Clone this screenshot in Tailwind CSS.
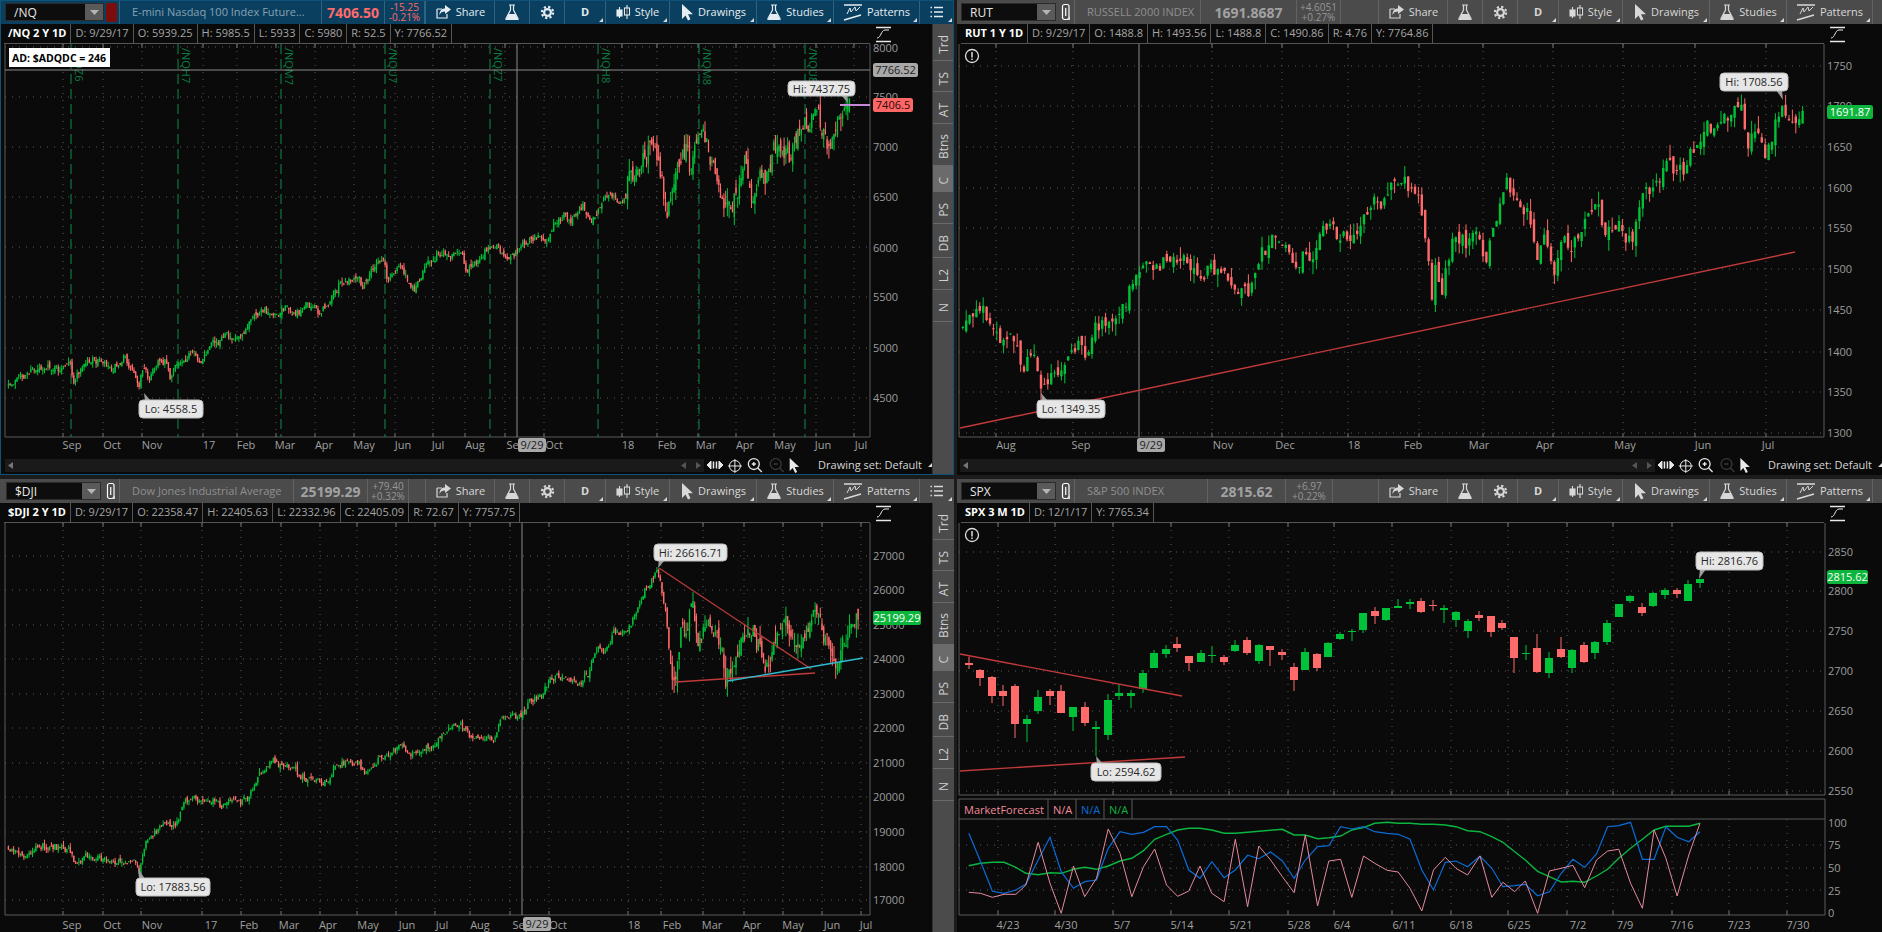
<!DOCTYPE html>
<html lang="en">
<head>
  <meta charset="UTF-8">
  <title>Flexible Grid</title>
  <script src="https://cdn.jsdelivr.net/npm/@tailwindcss/browser@4"></script>
</head>
<body class="bg-[#1c1c1c] font-['Open_Sans',sans-serif] overflow-hidden">
  <div id="grid" class="grid h-[932px] w-[1882px] grid-cols-[954px_925px] grid-rows-[475px_453px] gap-x-[3px] gap-y-[4px] overflow-hidden"></div>

  <script>
    const FONT = "'Open Sans',sans-serif";
    const GREEN = '#00c238', RED = '#ff6a6a';

    // toolbar icons
    const corner = '<svg class="absolute bottom-[2px] right-[2px]" width="4" height="4"><path d="M4 0V4H0z" fill="#d8d8d8"/></svg>';
    const icons = {
      share: '<svg width="17" height="16" viewBox="0 0 17 16" fill="none" stroke="currentColor" stroke-width="1.2"><path d="M2 5h5M2 5v9h10v-4"/><path d="M10 1l6 4.5-6 4.5V7.500C7 7.500 5.500 8.500 4.500 11c0-4 2-6.500 5.500-6.500z" fill="currentColor" stroke="none"/></svg>',
      flask: '<svg width="16" height="17" viewBox="0 0 16 17" fill="none" stroke="currentColor" stroke-width="1.2"><path d="M5 1h6M6.500 1v5l-4.500 8.500q-.5 1 .5 1h11q1 0 .5-1L9.500 6V1"/><path d="M4.500 10h7l2.500 5.500H2z" fill="currentColor" stroke="none"/></svg>',
      gear: '<svg width="15" height="15" viewBox="0 0 15 15" fill="none" stroke="currentColor"><circle cx="7.500" cy="7.500" r="5.600" stroke-width="2.200" stroke-dasharray="2.200 2.200"/><circle cx="7.500" cy="7.500" r="3.400" stroke-width="2.200"/></svg>',
      style: '<svg width="15" height="16" viewBox="0 0 15 16" fill="none" stroke="currentColor" stroke-width="1.100"><path d="M3.500 3v11M11 1v14"/><rect x="1" y="6" width="5" height="6" fill="currentColor"/><rect x="8.500" y="4" width="5" height="7" fill="#00000055"/></svg>',
      cursor: '<svg width="14" height="17" viewBox="0 0 14 17" fill="currentColor"><path d="M2 0v15l3.500-3.500 2.500 5 2.500-1.200-2.500-5h5z"/></svg>',
      patterns: '<svg width="20" height="18" viewBox="0 0 20 18" fill="none" stroke="currentColor"><path d="M1 2h18" stroke-width="1.500"/><path d="M4 11l3-6 1 4 4-5 1 4 4-4" stroke-width="1"/><path d="M1 17l17-5" stroke-width="1.500"/></svg>',
      list: '<svg width="14" height="14" viewBox="0 0 14 14" fill="none" stroke="currentColor" stroke-width="1.400"><path d="M4 2.500h9M4 7h9M4 11.500h9M.5 2.500h1.500M.5 7h1.500M.5 11.500h1.500"/></svg>',
      link: '<svg width="10" height="18" viewBox="0 0 10 18" fill="none" stroke="currentColor" stroke-width="1.200"><rect x="1.500" y="1.500" width="6.500" height="15" rx="2"/><path d="M4.750 5v8"/></svg>',
    };

    function cell(width, inner, more) {
      return `<div class="relative flex shrink-0 items-center justify-center gap-1 border-l ${width} ${more.sep}">${inner}${more.mark ? corner : ''}</div>`;
    }

    function toolbar(p) {
      const t = p.active
        ? { bar: 'bg-[#0b3f5f] text-[#e4edf2]', sep: 'border-[#2c6283]', desc: 'text-[#86a2b3]', price: 'text-[#ff6a6a]', change: 'text-[#ff6a6a]' }
        : { bar: 'bg-[#4b4b4b] text-[#d8d8d8]', sep: 'border-[#626262]', desc: 'text-[#8f8f8f]', price: 'text-[#a2a2a2]', change: 'text-[#969696]' };
      const linkBox = p.active
        ? '<div class="ml-[2px] h-[19px] w-[11px] rounded-[2px] bg-[#7c0d0d]"></div>'
        : `<div class="relative ml-1 flex h-[19px] w-[12px] items-center justify-center text-white">${icons.link}${corner}</div>`;
      return `
        <div class="flex h-6 shrink-0 overflow-hidden text-[11px] ${t.bar}">
          <div class="flex shrink-0 items-center ${p.leftW}">
            <div class="flex h-[18px] items-stretch border border-[#2b2b2b] bg-[#0d0d0d] ${p.inputW} ${p.inputMl}">
              <span class="flex-1 pl-2 text-[12px] leading-[17px] text-[#e8e8e8]">${p.symbol}</span>
              <span class="flex w-[18px] items-center justify-center bg-[#5a5a5a]"><svg width="9" height="5"><path d="M0 0h9L4.500 5z" fill="#b5b5b5"/></svg></span>
            </div>
            ${linkBox}
            <div class="ml-[2px] flex h-full min-w-0 flex-1 items-center whitespace-nowrap border-l pl-3 text-[11px] ${t.sep} ${t.desc}">${p.desc}</div>
            <div class="flex h-full shrink-0 items-center justify-center border-l text-[14px] font-bold ${p.priceW} ${t.sep} ${t.price}">${p.price}</div>
            <div class="flex h-full shrink-0 flex-col items-center justify-center border-l text-[10px] leading-[10px] ${p.changeW} ${t.sep} ${t.change}"><span>${p.change[0]}</span><span>${p.change[1]}</span></div>
            <div class="h-full shrink-0 border-l ${p.gapW} ${t.sep}"></div>
          </div>
          ${cell('w-[69px]', icons.share + '<span>Share</span>', { sep: t.sep })}
          ${cell('w-[35px]', icons.flask, { sep: t.sep })}
          ${cell('w-[35px]', icons.gear, { sep: t.sep })}
          ${cell('w-[41px]', '<span class="font-bold">D</span>', { sep: t.sep, mark: true })}
          ${cell('w-[64px]', icons.style + '<span>Style</span>', { sep: t.sep, mark: true })}
          ${cell('w-[87px]', icons.cursor + '<span>Drawings</span>', { sep: t.sep, mark: true })}
          ${cell('w-[77px]', icons.flask + '<span>Studies</span>', { sep: t.sep, mark: true })}
          ${cell('w-[86px]', icons.patterns + '<span>Patterns</span>', { sep: t.sep, mark: true })}
          ${cell('w-[35px]', icons.list, { sep: t.sep, mark: true })}
        </div>`;
    }

    function infoRow(p) {
      const cells = p.info.map((txt, i) =>
        `<span class="flex items-center border-r border-[#555] px-[4px] text-[11px] ${i === 0 ? 'font-bold text-white' : 'text-[#a5a5a5]'}">${txt}</span>`).join('');
      return `
        <div class="flex h-5 shrink-0 bg-[#0a0a0a]">
          <div class="ml-[4px] flex flex-1 border-b border-[#555]">${cells}</div>
          <div class="flex shrink-0 items-center pl-[5px] ${p.axisW}">
            <svg width="17" height="17" viewBox="0 0 17 17" fill="none" stroke="#e8e8e8"><path d="M1 1.500h15M1 15.500h15" stroke-width="1.500"/><path d="M2 12c4 0 4-8 8-8h4" stroke-width="1"/></svg>
          </div>
        </div>`;
    }

    function rail() {
      const tabs = [['Trd', 'h-[37px]'], ['TS', 'h-[31px]'], ['AT', 'h-[32px]'], ['Btns', 'h-[42px]'], ['C', 'h-[26px]'], ['PS', 'h-[32px]'], ['DB', 'h-[34px]'], ['L2', 'h-[32px]'], ['N', 'h-[32px]']];
      const html = tabs.map(([name, h]) =>
        `<div class="flex ${h} items-center justify-center border-b border-[#6a6a6a] pt-[5px] ${name === 'C' ? 'bg-[#6b6b6b]' : ''}"><span class="rotate-180 text-[12px] text-[#cfcfcf] [writing-mode:vertical-rl]">${name}</span></div>`).join('');
      return `<div class="flex w-[22px] shrink-0 flex-col border-l border-[#333] bg-[#4b4b4b]">${html}</div>`;
    }

    function bottomStrip(ml, w, gap) {
      return `
        <div class="flex h-4 shrink-0 items-center bg-[#0a0a0a] text-[11px] text-[#d5d5d5]">
          <div class="flex h-[13px] items-center justify-between bg-[#1a1a1a] px-[3px] ${ml} ${w}">
            <svg width="5" height="7"><path d="M5 0v7L0 3.500z" fill="#777"/></svg>
            <svg width="20" height="7"><path d="M5 0v7L0 3.500zM15 0v7l5-3.500z" fill="#555"/></svg>
          </div>
          <svg class="ml-[3px]" width="100" height="17" viewBox="0 0 100 17" fill="none" stroke="#e8e8e8">
            <path d="M0 8l4-4v8zM16 8l-4-4v8z" fill="#e8e8e8"/><path d="M6.500 4.500v7M9.500 4.500v7" stroke-width="1.500"/>
            <circle cx="28" cy="9" r="5.500"/><path d="M28 2v14M21 9h14"/>
            <circle cx="47" cy="7" r="5.500" stroke-width="1.300"/><path d="M45 7h4M47 5v4M51 11l4 4" stroke-width="1.300"/>
            <g stroke="#3a3a3a"><circle cx="69" cy="7" r="5.500" stroke-width="1.300"/><path d="M67 7h4M73 11l4 4" stroke-width="1.300"/></g>
            <path d="M83 1v13l3-3 2.500 5 2-1-2.500-5h4.500z" fill="#e8e8e8" stroke="none"/>
          </svg>
          <span class="whitespace-nowrap ${gap}">Drawing set: Default</span>
          <svg class="ml-[6px]" width="4" height="4"><path d="M4 0V4H0z" fill="#d8d8d8"/></svg>
        </div>`;
    }

    // svg helpers, coordinates are page pixels
    const txt = (x, y, s, fill, size = 11, extra = '') =>
      `<text x="${x}" y="${y}" fill="${fill}" font-size="${size}" font-family="${FONT}" ${extra}>${s}</text>`;
    const line = (x1, y1, x2, y2, stroke, w = 1, extra = '') =>
      `<line x1="${x1}" y1="${y1}" x2="${x2}" y2="${y2}" stroke="${stroke}" stroke-width="${w}" ${extra}/>`;

    function bubble(x, y, w, h, tailX, tailY, label) {
      const baseX = tailX < x + w / 2 ? tailX + 1 : tailX - 7;
      const edge = tailY < y ? y + 1 : y + h - 1;
      return `<path d="M${baseX} ${edge}L${baseX + 6} ${edge}L${tailX} ${tailY}z" fill="#9c9c9c"/>` +
        `<rect x="${x}" y="${y}" width="${w}" height="${h}" rx="4" fill="#e6e6e6" stroke="#bdbdbd"/>` +
        txt(x + w / 2, y + h / 2 + 4, label, '#262626', 11, 'text-anchor="middle"');
    }

    function tag(x, y, w, label, bg, color) {
      return `<rect x="${x}" y="${y - 7}" width="${w}" height="14" rx="2.500" fill="${bg}"/>` +
        txt(x + w / 2, y + 4, label, color, 11, 'text-anchor="middle"');
    }

    function frame(c) {
      let s = '';
      c.grid.forEach(y => { s += line(c.l, y, c.r, y, '#5a5a5a', 1, 'stroke-dasharray="1 6"'); });
      c.ticks.forEach(x => {
        s += line(x, c.t, x, c.b, '#5a5a5a', 1, 'stroke-dasharray="1 6"');
        s += line(x, c.t, x, c.t + 4, '#777') + line(x, c.b - 4, x, c.b, '#777');
      });
      s += line(c.l, c.t, c.l, c.b, '#5a5a5a') + line(c.r, c.t, c.r, c.b, '#5a5a5a') + line(c.l, c.b, c.r, c.b, '#5a5a5a');
      c.ylabels.forEach(([y, label]) => { s += txt(c.r + 3, y + 4, label, '#9c9c9c'); });
      c.xlabels.forEach(([x, label]) => { s += txt(x, c.labelY, label, '#a0a0a0', 11, 'text-anchor="middle"'); });
      return s;
    }

    // seeded random candles that follow hand-read waypoints
    function rng(seed) {
      return () => {
        seed = (seed + 0x6d2b79f5) | 0;
        let t = Math.imul(seed ^ (seed >>> 15), 1 | seed);
        t = (t + Math.imul(t ^ (t >>> 7), 61 | t)) ^ t;
        return ((t ^ (t >>> 14)) >>> 0) / 4294967296;
      };
    }

    function candlesFrom(raw, mapX, mapY, o) {
      const pts = [];
      for (let i = 0; i < raw.length; i += 2) pts.push([mapX(raw[i]), mapY(raw[i + 1])]);
      const rand = rng(o.seed);
      const out = [];
      let seg = 0, noise = 0, prev = pts[0][1];
      for (let x = pts[0][0]; x <= pts[pts.length - 1][0]; x += o.step) {
        while (seg < pts.length - 2 && x > pts[seg + 1][0]) seg++;
        const [x0, y0] = pts[seg], [x1, y1] = pts[seg + 1];
        const target = y0 + (y1 - y0) * (x - x0) / (x1 - x0);
        const big = x > o.split;
        const vol = big ? o.volB : o.volA, wick = big ? o.wickB : o.wickA;
        noise = noise * 0.3 + (rand() - 0.5) * vol * 2;
        const close = target + noise;
        const open = prev + (rand() - 0.5) * vol * 1.2;
        const top = Math.min(open, close), bot = Math.max(open, close);
        const up = rand(), down = rand();
        out.push([x, top, Math.max(bot, top + 1), top - up * up * wick * 1.6, bot + down * down * wick * 1.6, close < open]);
        prev = close;
      }
      return out;
    }

    function drawCandles(list, bodyW) {
      let g = '', r = '', gb = '', rb = '';
      list.forEach(([x, top, bot, hi, lo, up]) => {
        const wick = `M${x.toFixed(1)} ${hi.toFixed(1)}V${lo.toFixed(1)}`;
        const body = `M${x.toFixed(1)} ${top.toFixed(1)}V${bot.toFixed(1)}`;
        if (up) { g += wick; gb += body; } else { r += wick; rb += body; }
      });
      return `<path d="${g}" stroke="${GREEN}" fill="none"/><path d="${r}" stroke="${RED}" fill="none"/>` +
        `<path d="${gb}" stroke="${GREEN}" stroke-width="${bodyW}" fill="none"/><path d="${rb}" stroke="${RED}" stroke-width="${bodyW}" fill="none"/>`;
    }

    // /NQ
    const nqRaw = [15,895,25,875,45,855,70,830,95,835,115,840,125,825,130,880,140,850,155,815,185,810,200,835,220,800,235,835,248,878,255,830,265,865,285,812,297,810,303,860,320,815,340,790,360,815,380,765,405,740,425,735,455,680,470,665,495,665,515,650,525,675,548,640,570,665,585,640,605,585,640,570,645,600,665,535,685,508,690,570,715,530,738,600,755,540,780,490,800,505,825,495,830,540,845,525,865,480,885,470,908,515,930,465,960,435,975,465,985,405,1005,375,1020,395,1040,350,1055,400,1070,350,1085,312,1108,350,1120,270,1140,225,1160,165,1175,220,1188,380,1198,280,1222,180,1232,250,1248,120,1265,200,1280,300,1295,360,1310,320,1328,220,1340,320,1350,250,1360,285,1380,180,1410,200,1430,110,1458,80,1472,155,1488,165,1497,90,1510,50,1515,45];
    const nqCandles = candlesFrom(nqRaw, v => v / 1.782, v => 90 + v / 3, { seed: 7, step: 1.72, split: 625, volA: 4, volB: 10, wickA: 3, wickB: 8 });

    // RUT
    const rutRaw = [5,715,15,680,40,665,55,710,78,770,100,755,110,850,125,800,135,825,145,890,155,880,175,835,195,800,205,755,230,785,245,720,265,685,300,650,310,570,328,515,345,515,395,530,410,515,430,550,475,545,490,595,520,620,540,500,565,450,580,430,600,510,625,490,640,510,650,420,670,430,700,440,735,385,750,320,760,350,785,280,810,285,830,350,840,430,850,620,858,520,865,620,885,480,895,430,910,465,928,395,945,520,965,380,985,290,1010,355,1025,340,1040,510,1055,430,1070,570,1090,430,1098,505,1120,400,1140,340,1165,410,1185,400,1195,440,1215,425,1225,330,1250,280,1270,230,1305,235,1320,175,1350,110,1370,100,1395,70,1408,30,1420,140,1435,125,1443,190,1455,185,1470,100,1478,40,1490,80,1508,95,1520,70];
    const rutCandles = candlesFrom(rutRaw, v => 960 + v / 1.802, v => 90 + v / 3, { seed: 21, step: 3.4, split: 9999, volA: 9, volB: 9, wickA: 8, wickB: 8 });

    // $DJI
    const djiRaw = [15,925,45,945,75,915,120,925,135,975,155,945,200,965,235,960,248,988,258,925,265,890,295,860,315,850,328,780,370,780,400,800,415,765,430,785,445,760,465,700,485,655,500,680,525,680,535,715,585,725,597,665,640,670,650,705,680,650,715,620,740,640,775,605,800,570,820,550,840,595,880,590,890,550,905,525,925,535,945,480,965,465,980,420,1010,405,1030,430,1050,400,1065,320,1075,345,1095,275,1115,280,1135,215,1150,150,1172,90,1185,200,1195,370,1203,420,1215,240,1225,280,1235,175,1245,330,1260,215,1285,300,1293,410,1305,400,1320,310,1340,270,1365,380,1390,265,1410,260,1425,320,1447,218,1470,290,1490,355,1510,280,1530,235];
    const djiCandles = candlesFrom(djiRaw, v => v / 1.782, v => 540 + v / 3, { seed: 3, step: 1.72, split: 670, volA: 3.6, volB: 10, wickA: 2.5, wickB: 8 });

    // SPX candles read off the chart: x, body top, body bottom, wick top, wick bottom, up
    const spxA = [[27,429,435,410,447,0],[60,450,474,447,498,0],[96,471,528,468,549,0],[129,513,528,495,558,0],[165,498,612,492,654,0],[201,597,612,585,666,1],[234,531,573,510,582,1],[270,513,528,507,555,0],[303,513,579,495,579,0],[339,561,591,561,633,1],[375,561,609,546,618,0],[408,621,627,603,708,1],[444,540,645,522,660,1],[477,519,528,492,540,1],[513,519,528,510,564,1],[549,459,507,450,519,1],[582,399,444,390,444,1],[618,387,402,375,414,1],[651,372,384,351,396,0],[687,408,429,408,453,0],[723,399,426,390,426,1],[756,405,408,378,429,1],[792,411,426,405,435,0],[825,375,393,360,396,1],[861,360,399,351,405,0],[897,375,423,372,432,1],[930,378,390,378,438,0],[966,396,405,387,420,0],[1002,441,480,429,513,0],[1035,396,450,384,450,1],[1071,402,444,399,453,0],[1104,369,411,366,411,1],[1140,342,357,336,360,1],[1176,333,336,327,363,1],[1209,279,330,279,339,1],[1245,273,288,261,312,0],[1278,264,300,264,303,1],[1314,258,264,237,264,1],[1350,246,252,237,267,1],[1383,243,276,234,279,0],[1419,255,258,240,273,0],[1452,264,270,255,309,1]];
    const spxB = [[18,216,240,213,261,1],[54,243,273,237,294,1],[87,225,234,213,243,0],[123,228,276,228,291,0],[156,249,264,240,270,0],[192,291,354,291,399,0],[228,339,342,315,360,1],[261,324,396,282,399,0],[297,354,399,336,414,1],[333,327,351,291,354,0],[366,330,384,327,399,1],[402,315,366,306,369,0],[435,306,339,303,357,1],[471,249,306,240,315,1],[507,192,231,192,231,1],[540,168,183,165,189,1],[576,201,219,189,228,0],[609,159,198,156,201,1],[645,150,165,144,177,1],[681,150,162,144,174,0],[714,132,183,120,183,1],[750,117,129,117,144,1]];
    const spxCandles = [
      ...spxA.map(c => [960 + c[0] / 3, 520 + c[1] / 3, 520 + c[2] / 3, 520 + c[3] / 3, 520 + c[4] / 3, !!c[5]]),
      ...spxB.map(c => [1450 + c[0] / 3, 540 + c[1] / 3, 540 + c[2] / 3, 540 + c[3] / 3, 540 + c[4] / 3, !!c[5]]),
    ];

    // MarketForecast study, x is shared by all three lines
    const mfX = [15,35,55,75,95,112,133,153,172,193,212,232,252,272,292,312,331,351,370,389,408,428,449,468,489,508,528,548,568,587,608,627,647,666,686,705,726,745,765,785,805,825,843,863,884,904,923,943,961,982,1002,1022,1042,1062,1082,1101,1120,1140,1160,1180,1200,1219,1239,1258];
    const mfPink = [337,340,352,343,343,315,187,310,400,258,350,295,147,220,350,260,207,315,349,333,258,340,365,178,380,198,240,290,338,165,378,243,238,352,228,250,271,276,325,393,270,232,265,285,228,352,307,335,303,400,273,265,256,323,240,213,208,310,385,150,235,348,225,130];
    const mfBlue = [160,245,334,340,330,312,240,172,275,325,305,300,205,155,163,157,140,140,180,270,295,245,293,270,226,236,216,243,295,240,200,197,140,147,140,155,160,163,178,270,330,247,243,260,228,265,320,317,313,347,335,280,238,262,222,140,137,127,238,238,140,172,185,155];
    const mfGreen = [257,250,247,247,262,280,284,278,280,268,262,268,258,243,235,212,178,163,150,145,145,150,160,160,157,154,151,148,165,165,176,173,168,150,143,130,127,130,130,133,133,135,140,152,155,170,187,215,240,274,290,306,304,307,288,268,235,205,178,150,139,139,139,130];
    const mfLine = (ys, color, w) =>
      `<polyline fill="none" stroke="${color}" stroke-width="${w}" points="${ys.map((y, i) => `${(960 + mfX[i] / 1.7).toFixed(1)},${(780 + y / 3).toFixed(1)}`).join(' ')}"/>`;

    const nqChart = {
      l: 5, r: 870, t: 44, b: 437, labelY: 449,
      grid: [47, 97, 147, 197, 247, 297, 348, 398],
      ticks: [63, 103, 142, 203, 237, 276, 315, 354, 395, 433, 465, 505, 544, 622, 657, 698, 736, 774, 816, 854],
      ylabels: [[48, '8000'], [97, '7500'], [147, '7000'], [197, '6500'], [248, '6000'], [297, '5500'], [348, '5000'], [398, '4500']],
      xlabels: [[72, 'Sep'], [112, 'Oct'], [152, 'Nov'], [209, '17'], [246, 'Feb'], [285, 'Mar'], [324, 'Apr'], [364, 'May'], [403, 'Jun'], [438, 'Jul'], [475, 'Aug'], [516, 'Sep'], [554, 'Oct'], [628, '18'], [667, 'Feb'], [706, 'Mar'], [745, 'Apr'], [785, 'May'], [823, 'Jun'], [861, 'Jul']],
    };
    const rutChart = {
      l: 959, r: 1824, t: 44, b: 437, labelY: 449,
      grid: [66, 106, 147, 188, 228, 269, 310, 352, 392, 433],
      ticks: [996, 1073, 1212, 1282, 1348, 1419, 1483, 1553, 1623, 1695, 1766],
      ylabels: [[66, '1750'], [106, '1700'], [147, '1650'], [188, '1600'], [228, '1550'], [269, '1500'], [310, '1450'], [352, '1400'], [392, '1350'], [433, '1300']],
      xlabels: [[1006, 'Aug'], [1081, 'Sep'], [1223, 'Nov'], [1285, 'Dec'], [1354, '18'], [1413, 'Feb'], [1479, 'Mar'], [1545, 'Apr'], [1625, 'May'], [1703, 'Jun'], [1768, 'Jul']],
    };
    const djiChart = {
      l: 5, r: 870, t: 523, b: 915, labelY: 929,
      grid: [556, 590, 625, 659, 694, 728, 763, 797, 832, 867, 900],
      ticks: [63, 103, 141, 202, 241, 281, 320, 357, 396, 435, 470, 510, 549, 628, 661, 703, 744, 783, 822, 861],
      ylabels: [[556, '27000'], [590, '26000'], [625, '25000'], [659, '24000'], [694, '23000'], [728, '22000'], [763, '21000'], [797, '20000'], [832, '19000'], [867, '18000'], [900, '17000']],
      xlabels: [[72, 'Sep'], [112, 'Oct'], [152, 'Nov'], [211, '17'], [249, 'Feb'], [289, 'Mar'], [328, 'Apr'], [368, 'May'], [407, 'Jun'], [442, 'Jul'], [480, 'Aug'], [522, 'Sep'], [558, 'Oct'], [634, '18'], [672, 'Feb'], [712, 'Mar'], [752, 'Apr'], [793, 'May'], [832, 'Jun'], [866, 'Jul']],
    };
    const spxChart = {
      l: 959, r: 1825, t: 523, b: 795, labelY: 929,
      grid: [552, 591, 631, 671, 711, 751, 791],
      ticks: [998, 1055, 1113, 1171, 1229, 1288, 1334, 1392, 1451, 1508, 1567, 1613, 1672, 1729, 1787],
      ylabels: [[552, '2850'], [591, '2800'], [631, '2750'], [671, '2700'], [711, '2650'], [751, '2600'], [791, '2550']],
      xlabels: [[1008, '4/23'], [1066, '4/30'], [1122, '5/7'], [1182, '5/14'], [1241, '5/21'], [1299, '5/28'], [1342, '6/4'], [1404, '6/11'], [1461, '6/18'], [1519, '6/25'], [1578, '7/2'], [1625, '7/9'], [1682, '7/16'], [1739, '7/23'], [1798, '7/30']],
    };

    function warning(x, y) {
      return `<circle cx="${x}" cy="${y}" r="6.500" fill="none" stroke="#dcdcdc" stroke-width="1.300"/>` + line(x, y - 4, x, y + 1.500, '#dcdcdc', 1.500) + line(x, y + 2.500, x, y + 4, '#dcdcdc', 1.500);
    }

    function nqSvg() {
      const rolls = [[71, '/NQZ6'], [178, '/NQH7'], [281, '/NQM7'], [385, '/NQU7'], [490, '/NQZ7'], [598, '/NQH8'], [699, '/NQM8'], [805, '/NQU8']];
      let s = frame(nqChart);
      rolls.forEach(([x, label]) => {
        s += line(x, nqChart.t, x, nqChart.b, '#0f8a4a', 1, 'stroke-dasharray="10 5"');
        s += txt(x + 4, 48, label, '#0b7a42', 11, `transform="rotate(90 ${x + 4} 48)"`);
      });
      s += line(517, 44, 517, 437, '#8a8a8a') + line(5, 70, 870, 70, '#8a8a8a');
      s += drawCandles(nqCandles, 1.3);
      s += line(840, 105, 870, 105, '#c58ad6', 2);
      s += '<rect x="9" y="48" width="101" height="19" fill="#fff"/>' + txt(12, 62, 'AD: $ADQDC = 246', '#000', 10.5, 'font-weight="700"');
      s += bubble(788, 81, 67, 15, 848, 103, 'Hi: 7437.75') + bubble(139, 400, 64, 18, 144, 393, 'Lo: 4558.5');
      s += tag(873, 70, 45, '7766.52', '#a8a8a8', '#1d1d1d') + tag(873, 105, 40, '7406.5', '#ff6666', '#2a0a0a');
      s += tag(518, 445, 28, '9/29', '#a8a8a8', '#1d1d1d');
      return s;
    }

    function rutSvg() {
      let s = frame(rutChart);
      s += line(1139, 44, 1139, 437, '#8a8a8a');
      s += drawCandles(rutCandles, 2.4);
      s += line(960, 428, 1795, 252, '#c23a3a', 1.400);
      s += warning(972, 56);
      s += bubble(1720, 73, 68, 18, 1783, 100, 'Hi: 1708.56') + bubble(1037, 400, 68, 18, 1041, 393, 'Lo: 1349.35');
      s += tag(1827, 112, 46, '1691.87', '#0cb53c', '#fff');
      s += tag(1137, 445, 28, '9/29', '#a8a8a8', '#1d1d1d');
      return s;
    }

    function djiSvg() {
      let s = frame(djiChart);
      s += line(522, 523, 522, 915, '#8a8a8a');
      s += drawCandles(djiCandles, 1.3);
      s += line(659, 568, 811, 669, '#b53a3a', 1.400) + line(676, 682, 815, 673, '#c23a3a', 1.400) + line(728, 681, 863, 658, '#2fbcd0', 1.400);
      s += bubble(654, 544, 73, 17, 658, 568, 'Hi: 26616.71') + bubble(136, 878, 74, 18, 138, 868, 'Lo: 17883.56');
      s += tag(873, 618, 48, '25199.29', '#0cb53c', '#fff');
      s += tag(523, 924, 28, '9/29', '#a8a8a8', '#1d1d1d');
      return s;
    }

    function spxSvg() {
      let s = frame(spxChart);
      s += drawCandles(spxCandles, 8);
      s += line(960, 654, 1182, 696, '#c23a3a', 1.400) + line(960, 771, 1185, 757, '#c23a3a', 1.400);
      s += warning(972, 535);
      s += bubble(1696, 552, 67, 18, 1699, 579, 'Hi: 2816.76') + bubble(1091, 763, 70, 18, 1096, 756, 'Lo: 2594.62');
      s += tag(1827, 577, 41, '2815.62', '#0cb53c', '#fff');
      // study pane under the price pane
      s += line(959, 799, 1825, 799, '#5a5a5a') + line(959, 819, 1825, 819, '#5a5a5a') + line(959, 915, 1825, 915, '#5a5a5a') + line(1825, 799, 1825, 915, '#5a5a5a') + line(959, 799, 959, 915, '#5a5a5a');
      [1048, 1076, 1104, 1132].forEach(x => { s += line(x, 799, x, 819, '#5a5a5a'); });
      s += txt(964, 814, 'MarketForecast', '#f08a9c', 11) + txt(1053, 814, 'N/A', '#f08a9c', 11) + txt(1081, 814, 'N/A', '#0b6cd8', 11) + txt(1109, 814, 'N/A', '#0cb53c', 11);
      [845, 868, 890].forEach(y => { s += line(959, y, 1825, y, '#5a5a5a', 1, 'stroke-dasharray="1 6"'); });
      spxChart.ticks.forEach(x => { s += line(x, 819, x, 915, '#5a5a5a', 1, 'stroke-dasharray="1 6"') + line(x, 911, x, 915, '#777'); });
      [[823, '100'], [845, '75'], [868, '50'], [891, '25'], [913, '0']].forEach(([y, label]) => { s += txt(1828, y + 4, label, '#9c9c9c'); });
      s += mfLine(mfGreen, '#0ab540', 1.400) + mfLine(mfBlue, '#0b6cd8', 1.200) + mfLine(mfPink, '#e58a9c', 1);
      return s;
    }

    const panels = [
      { active: true, symbol: '/NQ', desc: 'E-mini Nasdaq 100 Index Future...', price: '7406.50', change: ['-15.25', '-0.21%'],
        leftW: 'w-[425px]', inputW: 'w-[99px]', inputMl: 'ml-[5px]', priceW: 'w-[63px]', changeW: 'w-[40px]', gapW: 'w-0',
        info: ['/NQ 2 Y 1D', 'D: 9/29/17', 'O: 5939.25', 'H: 5985.5', 'L: 5933', 'C: 5980', 'R: 52.5', 'Y: 7766.52'],
        axisW: 'w-[62px]', box: '0 44 932 413', svg: nqSvg, rail: true, strip: ['ml-[5px]', 'w-[702px]', 'ml-[11px]'] },
      { symbol: 'RUT', desc: 'RUSSELL 2000 INDEX', price: '1691.8687', change: ['+4.6051', '+0.27%'],
        leftW: 'w-[421px]', inputW: 'w-[95px]', inputMl: 'ml-[4px]', priceW: 'w-[96px]', changeW: 'w-[44px]', gapW: 'w-[38px]',
        info: ['RUT 1 Y 1D', 'D: 9/29/17', 'O: 1488.8', 'H: 1493.56', 'L: 1488.8', 'C: 1490.86', 'R: 4.76', 'Y: 7764.86'],
        axisW: 'w-[58px]', box: '957 44 925 413', svg: rutSvg, strip: ['ml-[3px]', 'w-[700px]', 'ml-[11px]'] },
      { symbol: '$DJI', desc: 'Dow Jones Industrial Average', price: '25199.29', change: ['+79.40', '+0.32%'],
        leftW: 'w-[425px]', inputW: 'w-[95px]', inputMl: 'ml-[6px]', priceW: 'w-[74px]', changeW: 'w-[41px]', gapW: 'w-[17px]',
        info: ['$DJI 2 Y 1D', 'D: 9/29/17', 'O: 22358.47', 'H: 22405.63', 'L: 22332.96', 'C: 22405.09', 'R: 72.67', 'Y: 7757.75'],
        axisW: 'w-[62px]', box: '0 523 932 409', svg: djiSvg, rail: true },
      { symbol: 'SPX', desc: 'S&amp;P 500 INDEX', price: '2815.62', change: ['+6.97', '+0.22%'],
        leftW: 'w-[421px]', inputW: 'w-[95px]', inputMl: 'ml-[4px]', priceW: 'w-[78px]', changeW: 'w-[47px]', gapW: 'w-[46px]',
        info: ['SPX 3 M 1D', 'D: 12/1/17', 'Y: 7765.34'],
        axisW: 'w-[58px]', box: '957 523 925 409', svg: spxSvg },
    ];

    document.getElementById('grid').innerHTML = panels.map(p => {
      const [x, y, w, h] = p.box.split(' ');
      return `
        <section class="relative flex min-w-0 flex-col overflow-hidden bg-[#0a0a0a]">
          ${toolbar(p)}
          <div class="flex min-h-0 flex-1">
            <div class="flex min-w-0 flex-1 flex-col">
              ${infoRow(p)}
              <svg class="block shrink-0 overflow-visible" width="${w}" height="${h}" viewBox="${p.box}">${p.svg()}</svg>
              ${p.strip ? bottomStrip(...p.strip) : ''}
            </div>
            ${p.rail ? rail() : ''}
          </div>
          ${p.active ? '<div class="pointer-events-none absolute inset-0 border border-[#0f5278]"></div>' : ''}
        </section>`;
    }).join('');
  </script>
</body>
</html>
